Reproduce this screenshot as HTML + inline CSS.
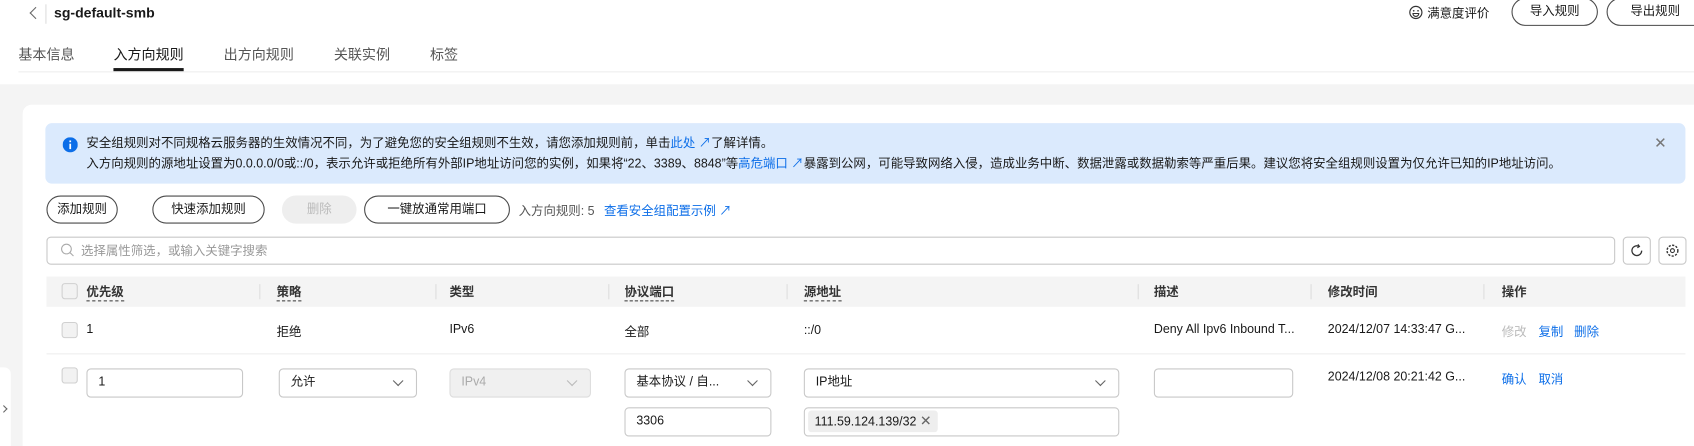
<!DOCTYPE html>
<html><head><meta charset="utf-8"><style>
*{box-sizing:border-box;margin:0;padding:0}
body{width:1694px;height:446px;overflow:hidden;background:#fff;font-family:"Liberation Sans","Noto Sans CJK SC",sans-serif;font-size:11.5px;color:#191919}
#w{position:absolute;left:0;top:0;width:1568px;height:413px;transform:scale(1.0804);transform-origin:0 0;overflow:hidden}
.a{position:absolute;white-space:nowrap}
.btn{position:absolute;height:26px;border:1px solid #4a4a4a;border-radius:14px;background:#fff;text-align:center;line-height:24px;color:#191919}
.inp{position:absolute;height:27px;border:1px solid #c8c8c8;border-radius:4px;background:#fff;line-height:25px;padding-left:10px}
.chk{position:absolute;width:15px;height:15px;border:1px solid #d0d0d0;border-radius:3px;background:#f2f2f2}
.sep{position:absolute;top:263px;width:1px;height:14px;background:#ddd}
.th{position:absolute;top:262px;font-weight:bold;color:#333;white-space:nowrap}
.dash{border-bottom:1px dashed #333;padding-bottom:1px}
.lnk{color:#0c6ee8}
.arr{position:absolute;right:13px;top:7px;width:7px;height:7px;border-right:1px solid #666;border-bottom:1px solid #666;transform:rotate(45deg)}
</style></head><body><div id="w">
<div class="a" style="left:29px;top:8px;width:8px;height:8px;border-left:1px solid #666;border-bottom:1px solid #666;transform:rotate(45deg)"></div>
<div class="a" style="left:42px;top:4px;width:1px;height:18px;background:#ddd"></div>
<div class="a" style="left:50px;top:4px;font-size:13px;font-weight:bold">sg-default-smb</div>
<svg class="a" style="left:1304px;top:5px" width="13" height="13" viewBox="0 0 13 13"><circle cx="6.5" cy="6.5" r="5.6" fill="none" stroke="#333" stroke-width="1.1"/><circle cx="4.5" cy="5" r=".8" fill="#333"/><circle cx="8.5" cy="5" r=".8" fill="#333"/><path d="M3.8 7.5h5.4a2.7 2.7 0 0 1-5.4 0z" fill="none" stroke="#333"/></svg>
<div class="a" style="left:1321px;top:4px">满意度评价</div>
<div class="btn" style="left:1399px;top:-2px;width:80px">导入规则</div>
<div class="btn" style="left:1487px;top:-2px;width:120px;text-align:left;padding-left:21px">导出规则</div>
<div class="a" style="left:17px;top:40px;font-size:13px;color:#555">基本信息</div>
<div class="a" style="left:105px;top:40px;font-size:13px">入方向规则</div>
<div class="a" style="left:105px;top:63px;width:65px;height:3px;background:#191919"></div>
<div class="a" style="left:207px;top:40px;font-size:13px;color:#555">出方向规则</div>
<div class="a" style="left:309px;top:40px;font-size:13px;color:#555">关联实例</div>
<div class="a" style="left:398px;top:40px;font-size:13px;color:#555">标签</div>
<div class="a" style="left:17px;top:66px;width:1551px;height:1px;background:#eee"></div>
<div class="a" style="left:0;top:78px;width:1568px;height:335px;background:#f4f4f4"></div>
<div class="a" style="left:0;top:340px;width:10px;height:73px;background:#fff;border-radius:0 6px 0 0"></div>
<div class="a" style="left:1px;top:376px;width:5px;height:5px;border-right:1px solid #666;border-top:1px solid #666;transform:rotate(45deg)"></div>
<div class="a" style="left:21px;top:97px;width:1547px;height:316px;background:#fff;border-radius:8px 0 0 0"></div>
<div class="a" style="left:42px;top:114px;width:1518px;height:56px;background:#dbeafd;border-radius:6px"></div>
<svg class="a" style="left:58px;top:127px" width="14" height="14" viewBox="0 0 14 14"><circle cx="7" cy="7" r="7" fill="#0c6ee8"/><rect x="6.2" y="6" width="1.6" height="5" fill="#fff"/><rect x="6.2" y="3" width="1.6" height="1.6" fill="#fff"/></svg>
<div class="a" style="left:80px;top:124px;line-height:19px">安全组规则对不同规格云服务器的生效情况不同，为了避免您的安全组规则不生效，请您添加规则前，单击<span class="lnk">此处</span> <span class="lnk">↗</span>了解详情。<br>入方向规则的源地址设置为0.0.0.0/0或::/0，表示允许或拒绝所有外部IP地址访问您的实例，如果将“22、3389、8848”等<span class="lnk">高危端口</span> <span class="lnk">↗</span>暴露到公网，可能导致网络入侵，造成业务中断、数据泄露或数据勒索等严重后果。建议您将安全组规则设置为仅允许已知的IP地址访问。</div>
<div class="a" style="left:1531px;top:124px;font-size:14px;color:#777">✕</div>
<div class="btn" style="left:43px;top:181px;width:66px">添加规则</div>
<div class="btn" style="left:141px;top:181px;width:104px">快速添加规则</div>
<div class="btn" style="left:261px;top:181px;width:69px;border-color:#eee;background:#eee;color:#bbb">删除</div>
<div class="btn" style="left:337px;top:181px;width:135px">一键放通常用端口</div>
<div class="a" style="left:480px;top:187px;color:#555">入方向规则: 5</div>
<div class="a lnk" style="left:559px;top:187px">查看安全组配置示例 ↗</div>
<div class="a" style="left:43px;top:219px;width:1452px;height:26px;border:1px solid #c8c8c8;border-radius:4px"></div>
<svg class="a" style="left:56px;top:225px" width="13" height="13" viewBox="0 0 13 13"><circle cx="5.5" cy="5.5" r="4.5" fill="none" stroke="#aaa"/><path d="M9 9l3 3" stroke="#aaa"/></svg>
<div class="a" style="left:75px;top:224px;color:#999">选择属性筛选，或输入关键字搜索</div>
<div class="a" style="left:1502px;top:219px;width:26px;height:26px;border:1px solid #c8c8c8;border-radius:4px"></div>
<svg class="a" style="left:1508px;top:225px" width="14" height="14" viewBox="0 0 14 14"><path d="M11.5 7A4.5 4.5 0 1 1 9 3" fill="none" stroke="#333" stroke-width="1.2"/><path d="M8 1.2l1.5 1.9-2 1.2" fill="none" stroke="#333"/></svg>
<div class="a" style="left:1535px;top:219px;width:26px;height:26px;border:1px solid #c8c8c8;border-radius:4px"></div>
<svg class="a" style="left:1541px;top:225px" width="14" height="14" viewBox="0 0 14 14"><circle cx="7" cy="7" r="5" fill="none" stroke="#333" stroke-width="1.3" stroke-dasharray="2 1.3"/><circle cx="7" cy="7" r="1.8" fill="none" stroke="#333"/></svg>
<div class="a" style="left:43px;top:256px;width:1517px;height:28px;background:#f4f4f4"></div>
<div class="chk" style="left:57px;top:262px"></div>
<div class="th" style="left:80px"><span class="dash">优先级</span></div>
<div class="sep" style="left:240px"></div>
<div class="th" style="left:256px"><span class="dash">策略</span></div>
<div class="sep" style="left:403px"></div>
<div class="th" style="left:416px">类型</div>
<div class="sep" style="left:563px"></div>
<div class="th" style="left:578px"><span class="dash">协议端口</span></div>
<div class="sep" style="left:728px"></div>
<div class="th" style="left:744px"><span class="dash">源地址</span></div>
<div class="sep" style="left:1053px"></div>
<div class="th" style="left:1068px">描述</div>
<div class="sep" style="left:1213px"></div>
<div class="th" style="left:1229px">修改时间</div>
<div class="sep" style="left:1373px"></div>
<div class="th" style="left:1390px">操作</div>
<div class="chk" style="left:57px;top:298px"></div>
<div class="a" style="left:80px;top:299px">1</div>
<div class="a" style="left:256px;top:299px">拒绝</div>
<div class="a" style="left:416px;top:299px">IPv6</div>
<div class="a" style="left:578px;top:299px">全部</div>
<div class="a" style="left:744px;top:300px">::/0</div>
<div class="a" style="left:1068px;top:299px">Deny All Ipv6 Inbound T...</div>
<div class="a" style="left:1229px;top:299px">2024/12/07 14:33:47 G...</div>
<div class="a" style="left:1390px;top:299px;color:#bbb">修改</div>
<div class="a lnk" style="left:1424px;top:299px">复制</div>
<div class="a lnk" style="left:1457px;top:299px">删除</div>
<div class="a" style="left:43px;top:327px;width:1517px;height:1px;background:#eee"></div>
<div class="chk" style="left:57px;top:340px"></div>
<div class="inp" style="left:80px;top:341px;width:145px">1</div>
<div class="inp" style="left:258px;top:341px;width:128px">允许<span class="arr"></span></div>
<div class="inp" style="left:416px;top:341px;width:131px;background:#f0f0f0;color:#aaa;border-color:#ddd">IPv4<span class="arr" style="border-color:#bbb"></span></div>
<div class="inp" style="left:578px;top:341px;width:136px">基本协议 / 自...<span class="arr"></span></div>
<div class="inp" style="left:578px;top:377px;width:136px">3306</div>
<div class="inp" style="left:744px;top:341px;width:292px">IP地址<span class="arr"></span></div>
<div class="inp" style="left:744px;top:377px;width:292px;padding-left:3px"><span style="display:inline-block;background:#eee;border-radius:3px;height:20px;line-height:20px;padding:0 6px;margin-top:2px;vertical-align:top">111.59.124.139/32 <span style="color:#666;font-size:13px">✕</span></span></div>
<div class="inp" style="left:1068px;top:341px;width:129px"></div>
<div class="a" style="left:1229px;top:343px">2024/12/08 20:21:42 G...</div>
<div class="a lnk" style="left:1390px;top:343px">确认</div>
<div class="a lnk" style="left:1424px;top:343px">取消</div>
</div></body></html>
